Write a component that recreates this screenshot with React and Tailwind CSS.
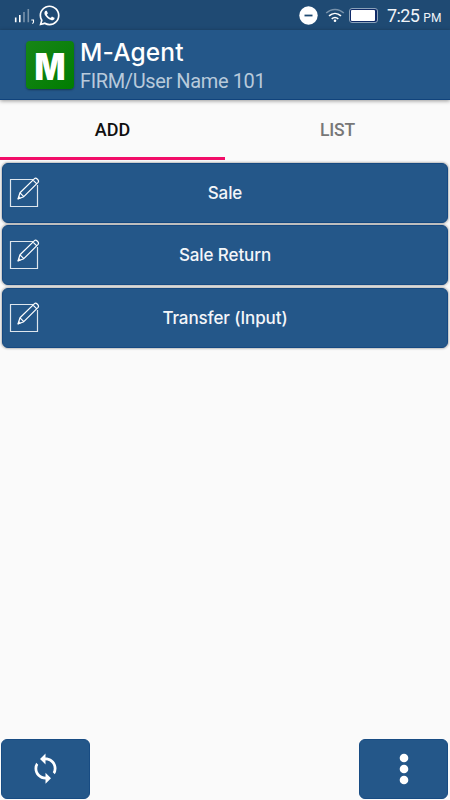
import React, { useState } from 'react';
import { FaWhatsapp } from 'react-icons/fa';
import { MdSync } from 'react-icons/md';

const actions = ['Sale', 'Sale Return', 'Transfer (Input)'];

function StatusBar() {
  return (
    <div className="flex h-[30px] shrink-0 items-center bg-[#1f4a73] pl-[14px] pr-[9px] text-white">
      <svg width="21" height="18" viewBox="0 0 21 18" className="mt-[1px]">
        <path d="M1.7 10.5v4.8M5.8 8v7.3" stroke="#fff" strokeWidth="1.6" />
        <path d="M10 5v10.3M14.3 2v13.3" stroke="#fff" strokeOpacity=".4" strokeWidth="1.6" />
        <path d="M17.3 13h2.2v2.2l-1 1.6" stroke="#fff" strokeWidth="1.1" fill="none" />
      </svg>
      <FaWhatsapp className="ml-[3px] size-[23px]" />
      <div className="ml-auto flex items-center">
        <svg width="19" height="19" viewBox="0 0 19 19">
          <circle cx="9.5" cy="9.5" r="9.2" fill="#fff" />
          <path d="M5.5 9.5h8" stroke="#1f4a73" strokeWidth="1.8" />
        </svg>
        <svg width="20" height="16" viewBox="0 0 20 16" className="ml-[7px] mt-[1px]" fill="none" stroke="#fff" strokeWidth="1.5">
          <path d="M1.2 5c5.2-4.8 12.4-4.8 17.6 0" strokeOpacity=".4" />
          <path d="M4 7.9c3.6-3.3 8.4-3.3 12 0M6.7 10.9c2.1-1.8 4.5-1.8 6.6 0" />
          <circle cx="10" cy="12.8" r="1.3" fill="#fff" stroke="none" />
        </svg>
        <div className="ml-[4px] h-[15px] w-[29px] rounded-[3px] border border-[#8ba2b9] bg-[#102b68] p-[1px]">
          <div className="h-full w-[24px] rounded-[1px] bg-white" />
        </div>
        <div className="ml-[9px] mt-[2px] flex w-[54px] items-baseline whitespace-nowrap leading-none text-[#f0f4f8]">
          <span className="text-[18px] tracking-[-0.6px]">7:25</span>
          <span className="ml-[4px] text-[12px]">PM</span>
        </div>
      </div>
    </div>
  );
}

function Header() {
  return (
    <header className="z-10 flex h-[70px] shrink-0 border-b border-[#10437c] bg-[#245789] pl-[26px] pt-[11px] shadow-[0_1px_4px_rgba(0,0,0,0.4)]">
      <div className="size-[48px] rounded-[4px] bg-gradient-to-br from-[#168516] to-[#007d00] shadow-[0_1px_2px_rgba(0,0,0,0.4)]">
        <svg width="48" height="48" viewBox="0 0 48 48" className="overflow-visible">
          <text x="24" y="38.5" textAnchor="middle" textLength="31" lengthAdjust="spacingAndGlyphs" fill="#fff" className="font-[Inter] text-[36.5px] font-black">M</text>
        </svg>
      </div>
      <div className="ml-[6px] whitespace-nowrap">
        <h1 className="font-[Inter] text-[24.5px] font-medium leading-[23px] tracking-[0.15px] text-white">M-Agent</h1>
        <p className="mt-[4px] text-[20px] leading-[26px] tracking-[-0.38px] text-[#b8cadb]">FIRM/User Name 101</p>
      </div>
    </header>
  );
}

function PencilIcon() {
  return (
    <svg width="32" height="32" viewBox="0 0 32 32" fill="none" stroke="#fff">
      <path d="M24 2.5H1.5v27h27V8" strokeOpacity=".85" strokeWidth="1.2" />
      <path d="M9 22l2-6.2L25.5 1.6c1.5-1.4 5.1 2 3.6 3.7L14.8 19.7 9 22zM11 15.8l3.8 3.9M24 3.1l3.8 3.8" strokeWidth="1.2" strokeLinejoin="round" />
      <path d="M9 22l.9-2.6 1.7 1.6z" fill="#fff" strokeWidth=".5" />
    </svg>
  );
}

function App() {
  const [tab, setTab] = useState('ADD');

  return (
    <div className="flex h-[800px] w-[450px] flex-col overflow-hidden bg-[#fafafa] font-[Roboto,sans-serif]">
      <StatusBar />
      <Header />
      <div className="grid h-[60px] shrink-0 grid-cols-2">
        {['ADD', 'LIST'].map((name) => (
          <button
            key={name}
            onClick={() => setTab(name)}
            className={
              tab === name
                ? 'border-b-[3px] border-[#f20d68] pt-[2px] text-[18px] font-medium text-[#101010]'
                : 'border-b-[3px] border-transparent pt-[3px] text-[17.5px] font-medium tracking-[-0.2px] text-[#777]'
            }
          >
            {name}
          </button>
        ))}
      </div>
      <div className="flex flex-col gap-[2.5px] px-[2.4px] pt-[2.5px]">
        {actions.map((name) => (
          <button
            key={name}
            className="grid h-[60px] grid-cols-[40px_1fr_40px] items-center rounded-[6px] border border-[#164981] bg-[#245789] px-[6px] text-[#f4f6f9] shadow-[0_0_2px_1px_rgba(0,0,0,0.25)]"
          >
            <PencilIcon />
            <span className="pt-[2px] font-[Inter] text-[17px] font-medium tracking-[-0.1px]">{name}</span>
          </button>
        ))}
      </div>
      <div className="mt-auto flex justify-between pb-[1.5px] pl-[1px] pr-[2px]">
        <button className="flex h-[60px] w-[89px] items-center justify-center rounded-[6px] border border-[#184c83] bg-[#245789] text-white">
          <MdSync className="size-[33px]" />
        </button>
        <button className="flex h-[60px] w-[89px] items-center justify-center rounded-[6px] border border-[#184c83] bg-[#245789] text-white">
          <svg width="10" height="32" viewBox="0 0 10 32" fill="currentColor">
            <circle cx="5" cy="5" r="4.3" />
            <circle cx="5" cy="16" r="4.3" />
            <circle cx="5" cy="27" r="4.3" />
          </svg>
        </button>
      </div>
    </div>
  );
}

export default App;
